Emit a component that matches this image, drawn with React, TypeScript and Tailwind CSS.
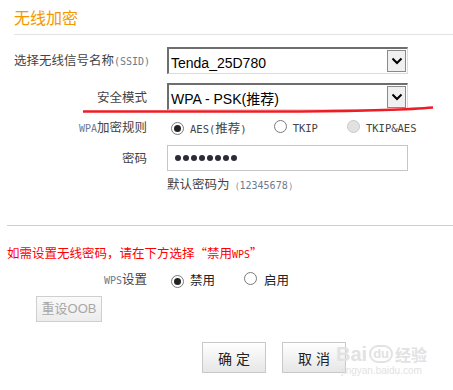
import React from "react"

const cjk = { fontFamily: '"Noto Sans CJK SC", "Noto Sans", sans-serif' }
const arial = { fontFamily: '"Liberation Sans", Arial, "Noto Sans CJK SC", sans-serif' }
const mono = { fontFamily: '"DejaVu Sans Mono", "Liberation Mono", monospace' }

function Radio({ checked, disabled }: { checked?: boolean; disabled?: boolean }) {
  return (
    <span
      className={
        "inline-flex h-[13px] w-[13px] items-center justify-center rounded-full border " +
        (disabled ? "border-[#c8c8c8] bg-[#e2e2e2]" : "border-[#7a7a7a] bg-white")
      }
    >
      {checked && <span className="h-[7px] w-[7px] rounded-full bg-[#222]" />}
    </span>
  )
}

function Select({ value }: { value: string }) {
  return (
    <div className="flex h-[27px] w-[241px] items-stretch border-t-2 border-l-2 border-t-[#6e6e6e] border-l-[#6e6e6e] border-r border-b border-r-[#dcdcdc] border-b-[#dcdcdc] bg-white">
      <span className="flex flex-1 items-center pl-[2px] pt-[3px] text-[14px] leading-[16px] text-black" style={arial}>
        {value}
      </span>
      <span className="m-[1px] flex w-[19px] items-center justify-center border border-[#8a8a8a] bg-[#f0f0f0]">
        <svg width="12" height="8" viewBox="0 0 12 8">
          <path d="M1.5 1.5 L6 6 L10.5 1.5" fill="none" stroke="#000" strokeWidth="2" />
        </svg>
      </span>
    </div>
  )
}

function Row({ label, children, className }: { label: React.ReactNode; children: React.ReactNode; className?: string }) {
  return (
    <div className={"flex items-center " + (className ?? "")}>
      <div className="w-[147px] shrink-0 whitespace-nowrap text-right text-[12.5px] leading-[16px] text-[#444]">{label}</div>
      <div className="ml-[20px] flex items-center">{children}</div>
    </div>
  )
}

export default function App() {
  return (
    <div className="relative h-[390px] w-[453px] overflow-hidden bg-white" style={cjk}>
      <div className="flex h-[34px] items-center px-[14px]">
        <div className="text-[16px] leading-[20px] text-[#f39800]">无线加密</div>
      </div>
      <div className="ml-[14px] h-px bg-[#e3e3e3]" />

      <div className="mt-[12px] flex h-[27px] items-center">
        <div className="ml-[14px] w-[133px] shrink-0 whitespace-nowrap text-[12.5px] leading-[16px] text-[#444]">
          选择无线信号名称<span className="text-[10px] text-[#6b7b90]" style={mono}>(SSID)</span>
        </div>
        <div className="ml-[20px]">
          <Select value="Tenda_25D780" />
        </div>
      </div>

      <Row label="安全模式" className="mt-[9px] h-[27px]">
        <Select value="WPA - PSK(推荐)" />
      </Row>

      <Row
        className="mt-[8px] h-[20px]"
        label={
          <span>
            <span className="text-[10px] text-[#6b7b90]" style={mono}>WPA</span>加密规则
          </span>
        }
      >
        <div className="flex items-center text-[10.5px] leading-[16px] text-[#444]">
          <span className="ml-[4px]"><Radio checked /></span>
          <span className="ml-[6px]" style={mono}>
            AES(<span style={cjk} className="text-[12.5px]">推荐</span>)
          </span>
          <span className="ml-[27px]"><Radio /></span>
          <span className="ml-[6px]" style={mono}>TKIP</span>
          <span className="ml-[29px]"><Radio disabled /></span>
          <span className="ml-[6px]" style={mono}>TKIP&amp;AES</span>
        </div>
      </Row>

      <Row label="密码" className="mt-[7px] h-[26px]">
        <div className="flex h-[26px] w-[241px] items-center border border-[#c6c6c6] bg-white pl-[7px]">
          <div className="flex gap-[2px]">
            {Array.from({ length: 8 }).map((_, i) => (
              <span key={i} className="h-[6px] w-[6px] rounded-full bg-[#2b2b3a]" />
            ))}
          </div>
        </div>
      </Row>

      <div className="ml-[167px] mt-[5px] h-[16px] whitespace-nowrap text-[12.5px] leading-[16px] text-[#444]">
        默认密码为<span className="text-[10px] text-[#6b7b90]" style={mono}>（12345678）</span>
      </div>

      <div className="ml-[7px] mt-[33px] h-px bg-[#cfcfcf]" />

      <div className="ml-[7px] mt-[19px] h-[16px] whitespace-nowrap text-[12.5px] leading-[16px] text-[#ff0000]">
        如需设置无线密码，请在下方选择“禁用<span className="text-[10px]" style={mono}>WPS</span>”
      </div>

      <Row
        className="mt-[9px] h-[20px]"
        label={
          <span>
            <span className="text-[10px] text-[#6b7b90]" style={mono}>WPS</span>设置
          </span>
        }
      >
        <div className="flex items-center text-[12.5px] leading-[16px] text-[#222]">
          <span className="ml-[4px]"><Radio checked /></span>
          <span className="ml-[6px]">禁用</span>
          <span className="ml-[29px]"><Radio /></span>
          <span className="ml-[7px]">启用</span>
        </div>
      </Row>

      <div className="ml-[36px] mt-[4px]">
        <button className="h-[26px] w-[66px] border border-[#cfcfcf] bg-gradient-to-b from-[#fafafa] to-[#ececec] text-[13px] leading-[16px] text-[#a8a8a8]" style={arial}>
          重设OOB
        </button>
      </div>

      <div className="ml-[202px] mt-[20px] flex gap-[16px]">
        <button className="h-[31px] w-[64px] border border-[#c8c8c8] bg-gradient-to-b from-[#ffffff] to-[#e6e6e6] pl-[4px] text-[14px] leading-[16px] tracking-[4px] text-[#222]">
          确定
        </button>
        <button className="h-[31px] w-[64px] border border-[#c8c8c8] bg-gradient-to-b from-[#ffffff] to-[#e6e6e6] pl-[4px] text-[14px] leading-[16px] tracking-[4px] text-[#222]">
          取消
        </button>
      </div>

      {/* watermark */}
      <div className="absolute left-[336px] top-[343px] flex flex-col items-center text-[#e2e2e2]" style={arial}>
        <div className="flex items-center text-[20px] font-bold leading-[22px]">
          Bai
          <span className="mx-[2px] rounded-full border-2 border-[#e2e2e2] px-[2px] text-[13px] leading-[14px]">du</span>
          <span style={cjk} className="text-[16px]">经验</span>
        </div>
        <div className="text-[10px] leading-[12px]">jingyan.baidu.com</div>
      </div>

      {/* red annotation line */}
      <svg className="absolute left-0 top-0" width="453" height="390">
        <path d="M83 111.5 L300 111.5 Q400 110.5 433 107.5" fill="none" stroke="#ee1c25" strokeWidth="2.5" />
      </svg>
    </div>
  )
}
